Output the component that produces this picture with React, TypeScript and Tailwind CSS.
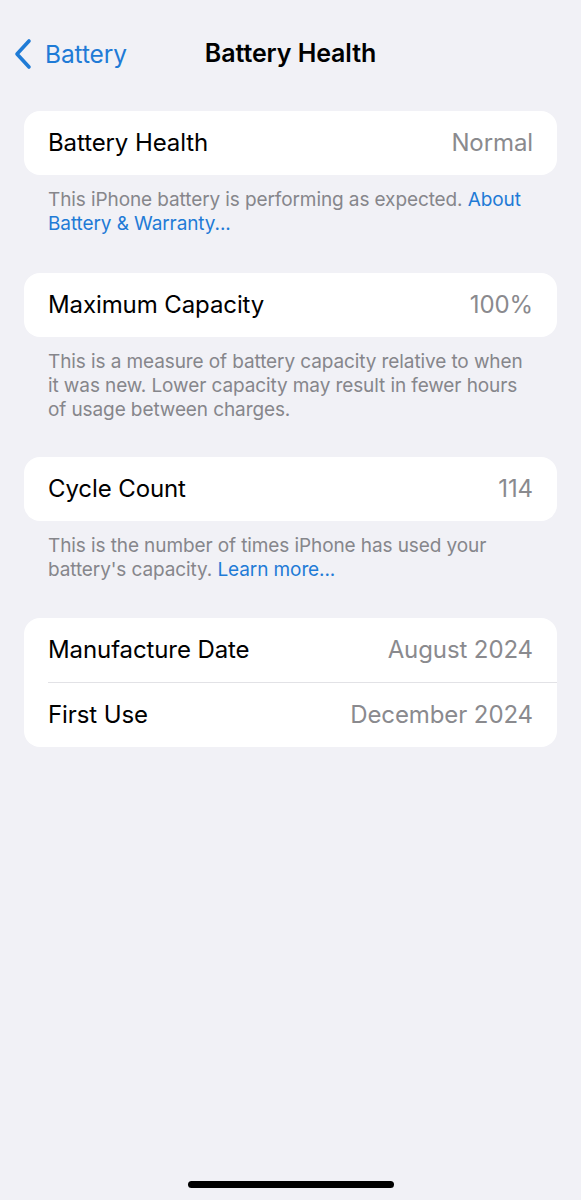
import { FC, ReactNode } from "react";

const font = { fontFamily: "Inter, 'Noto Sans', sans-serif" };

interface RowProps {
  label: string;
  value: string;
}

const Row: FC<RowProps> = ({ label, value }) => (
  <div className="flex h-16 items-center justify-between pl-6 pr-6">
    <span className="text-[24px] tracking-[-0.1px] text-black">{label}</span>
    <span className="text-[24px] tracking-[-0.1px] text-[#8a8a8e]">{value}</span>
  </div>
);

const Card: FC<{ children: ReactNode }> = ({ children }) => (
  <div className="mx-6 overflow-hidden rounded-2xl bg-white">{children}</div>
);

const Footer: FC<{ children: ReactNode }> = ({ children }) => (
  <p className="mx-12 mt-[13px] text-[19px] leading-6 tracking-[-0.1px] text-[#86868b]">
    {children}
  </p>
);

const Link: FC<{ children: ReactNode }> = ({ children }) => (
  <span className="text-[#1f7bd6]">{children}</span>
);

export default function App() {
  return (
    <div className="relative flex h-[1200px] w-[581px] flex-col bg-[#f1f1f6]" style={font}>
      {/* navigation bar */}
      <div className="relative flex h-[104px] items-start pt-[36px]">
        <div className="flex items-center pl-[12px]">
          <svg width="22" height="32" viewBox="0 0 22 32" fill="none">
            <path
              d="M17 3 L5 16 L17 29"
              stroke="#1f7bd6"
              strokeWidth="3.6"
              strokeLinecap="round"
              strokeLinejoin="round"
            />
          </svg>
          <span className="ml-[11px] text-[24.5px] tracking-[-0.1px] text-[#1f7bd6]">Battery</span>
        </div>
        <div className="absolute left-0 right-0 top-[35px] text-center text-[25px] font-semibold tracking-[-0.1px] text-black">
          Battery Health
        </div>
      </div>

      <div className="mt-[7px]">
        <Card>
          <Row label="Battery Health" value="Normal" />
        </Card>
        <Footer>
          This iPhone battery is performing as expected. <Link>About Battery &amp; Warranty...</Link>
        </Footer>
      </div>

      <div className="mt-[37px]">
        <Card>
          <Row label="Maximum Capacity" value="100%" />
        </Card>
        <Footer>
          This is a measure of battery capacity relative to when it was new. Lower capacity may
          result in fewer hours of usage between charges.
        </Footer>
      </div>

      <div className="mt-[35px]">
        <Card>
          <Row label="Cycle Count" value="114" />
        </Card>
        <Footer>
          This is the number of times iPhone has used your battery's capacity.{" "}
          <Link>Learn more...</Link>
        </Footer>
      </div>

      <div className="mt-[36px]">
        <Card>
          <Row label="Manufacture Date" value="August 2024" />
          <div className="ml-6 h-px bg-[#e2e2e6]" />
          <Row label="First Use" value="December 2024" />
        </Card>
      </div>

      {/* home indicator */}
      <div className="absolute bottom-[12px] left-[188px] h-[7px] w-[206px] rounded-full bg-black" />
    </div>
  );
}
